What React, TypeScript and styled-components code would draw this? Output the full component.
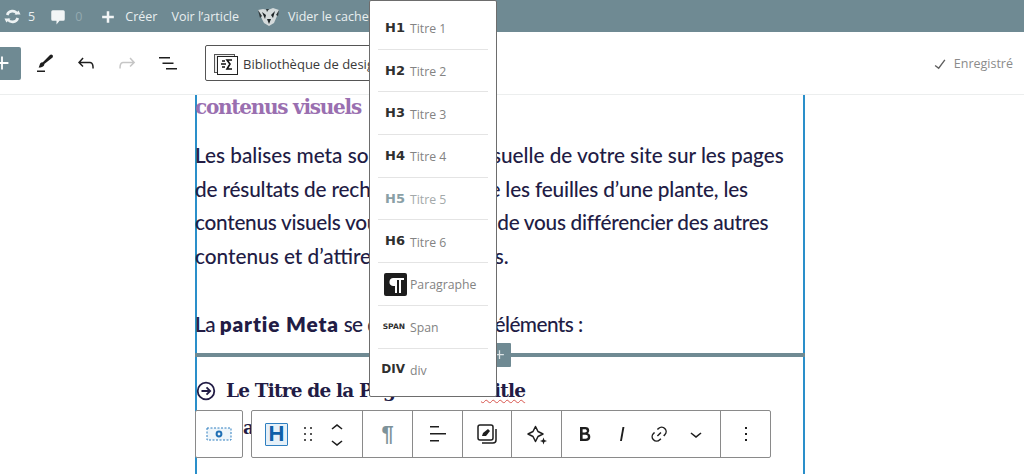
import React from 'react';
import styled, { createGlobalStyle } from 'styled-components';

// == constants ====================================================================================
const Slate = '#6f8a93';
const Ink = '#221c45';
const ToolBorder = '#8a8a8a';
const EdgeBlue = '#2a8fca';

const headings = [
  { tag: 'H1', label: 'Titre 1' },
  { tag: 'H2', label: 'Titre 2' },
  { tag: 'H3', label: 'Titre 3' },
  { tag: 'H4', label: 'Titre 4' },
  { tag: 'H5', label: 'Titre 5', faded: true },
  { tag: 'H6', label: 'Titre 6' },
];

// == styles =======================================================================================
const GlobalStyle = createGlobalStyle`
  html, body {
    margin: 0;
    padding: 0;
    background: #fff;
    overflow: hidden;
  }
`;

const Root = styled.div`
  position: relative;
  width: 1024px;
  height: 474px;
  overflow: hidden;
  font-family: "Open Sans", sans-serif;
`;

const AdminBar = styled.div`
  display: flex;
  align-items: center;
  height: 32px;
  padding: 1px 0 0 4px;
  box-sizing: border-box;
  background: ${ Slate };
  color: #e9eff0;
  font-size: 12.5px;
`;

const AdminItem = styled.div<{ gap?: number; after?: number; dim?: boolean }>`
  display: flex;
  align-items: center;
  gap: ${ ( { gap } ) => gap ?? 8 }px;
  margin-right: ${ ( { after } ) => after ?? 16 }px;
  white-space: nowrap;
  span {
    color: ${ ( { dim } ) => ( dim ? '#93a9b0' : 'inherit' ) };
  }
`;

const EditorBar = styled.div`
  display: flex;
  align-items: center;
  height: 62px;
  border-bottom: 1px solid #eceeee;
`;

const AddButton = styled.div`
  display: flex;
  align-items: center;
  justify-content: flex-end;
  width: 21px;
  height: 33px;
  margin-right: 12px;
  padding-right: 8px;
  box-sizing: border-box;
  border-radius: 0 2px 2px 0;
  background: ${ Slate };
  overflow: hidden;
  svg {
    flex-shrink: 0;
  }
`;

const BarIcon = styled.div<{ after?: number }>`
  display: flex;
  width: 24px;
  height: 24px;
  margin-right: ${ ( { after } ) => after ?? 17 }px;
`;

const LibraryButton = styled.div`
  display: flex;
  align-items: center;
  gap: 5px;
  width: 200px;
  height: 36px;
  margin-left: -1px;
  padding: 1px 0 0 8px;
  box-sizing: border-box;
  border: 1px solid #555;
  border-radius: 2px;
  font-size: 13px;
  color: #3a3a3a;
  white-space: nowrap;
`;

const SaveState = styled.div`
  display: flex;
  align-items: center;
  gap: 3px;
  margin-left: auto;
  margin-right: 11px;
  padding-top: 1px;
  font-size: 12.5px;
  color: #8b8b8b;
`;

const Content = styled.div`
  position: relative;
  width: 610px;
  height: 379px;
  margin-left: 195px;
  box-sizing: border-box;
  box-shadow: inset 2px 0 0 ${ EdgeBlue }, inset -2px 0 0 ${ EdgeBlue };
  color: ${ Ink };
`;

const SectionTitle = styled.h2`
  margin: 0;
  height: 25px;
  font-family: "DejaVu Serif", serif;
  font-size: 20px;
  line-height: 25px;
  font-weight: 700;
  letter-spacing: -1.25px;
  color: #9a6fb0;
`;

const Paragraph = styled.div<{ top: number }>`
  margin-top: ${ ( { top } ) => top }px;
  font-family: "Lato", sans-serif;
  font-size: 20.75px;
  font-weight: 500;
  line-height: 33.7px;
  white-space: nowrap;
`;

const TextLine = styled.div<{ tracking?: number }>`
  letter-spacing: ${ ( { tracking } ) => tracking ?? 0 }px;
  strong {
    font-weight: 800;
    letter-spacing: 0.9px;
  }
`;

// the part of a line that sits under the heading menu
const CoveredRun = styled.span`
  letter-spacing: 1px;
`;

const Separator = styled.div`
  position: relative;
  height: 4px;
  margin-top: 11px;
  background: ${ Slate };
`;

const InsertButton = styled.div`
  position: absolute;
  left: 292px;
  top: -10px;
  display: flex;
  align-items: center;
  justify-content: center;
  width: 24px;
  height: 24px;
  border-radius: 1px;
  background: ${ Slate };
`;

const ListHeading = styled.div`
  display: flex;
  align-items: center;
  gap: 10px;
  margin: 21px 0 0 1px;
  font-family: "DejaVu Serif", serif;
  font-size: 18.5px;
  line-height: 26px;
  font-weight: 700;
  letter-spacing: -0.8px;
  white-space: nowrap;
`;

const Squiggle = styled.span`
  text-decoration: underline wavy #d8554e 1px;
  text-underline-offset: 2px;
`;

const TrailingLine = styled.div`
  margin: 11px 0 0 48px;
  font-family: "DejaVu Serif", serif;
  font-size: 18px;
  line-height: 26px;
  font-weight: 700;
`;

const HeadingMenu = styled.div`
  position: absolute;
  left: 369px;
  top: 0;
  width: 128px;
  height: 397px;
  padding: 6px 8px 0 8px;
  box-sizing: border-box;
  background: #fff;
  border: 1px solid #6d6d6d;
  border-radius: 2px;
`;

const MenuRow = styled.div<{ last?: boolean }>`
  display: flex;
  align-items: center;
  height: 42.7px;
  padding-top: 1px;
  box-sizing: border-box;
  border-bottom: ${ ( { last } ) => ( last ? 'none' : '1px solid #e4e4e4' ) };
`;

const MenuTag = styled.div<{ size?: number; faded?: boolean }>`
  display: flex;
  justify-content: flex-end;
  width: 27px;
  margin-right: 5px;
  margin-top: -2px;
  font-family: "DejaVu Sans", sans-serif;
  font-size: ${ ( { size } ) => size ?? 13 }px;
  font-weight: 700;
  color: ${ ( { faded } ) => ( faded ? '#8aa0a6' : '#2f2f2f' ) };
  white-space: nowrap;
`;

const MenuLabel = styled.div<{ faded?: boolean }>`
  margin-top: 1px;
  font-family: "Open Sans", sans-serif;
  font-size: 12.25px;
  color: ${ ( { faded } ) => ( faded ? '#a3a9aa' : '#838383' ) };
`;

const ParagraphTile = styled.div`
  display: flex;
  align-items: center;
  justify-content: center;
  width: 23px;
  height: 23px;
  margin: 0 3px 0 6px;
  border-radius: 2px;
  background: #1d1d1d;
`;

const BlockTools = styled.div`
  position: absolute;
  left: 195px;
  top: 410px;
  display: flex;
  gap: 8px;
`;

const ToolPanel = styled.div`
  display: flex;
  height: 48px;
  box-sizing: border-box;
  background: #fff;
  border: 1px solid ${ ToolBorder };
  border-radius: 2px;
`;

const ToolGroup = styled.div<{ width: number; divider?: boolean }>`
  display: flex;
  align-items: center;
  justify-content: center;
  width: ${ ( { width } ) => width }px;
  box-sizing: border-box;
  border-right: ${ ( { divider } ) => ( divider ? `1px solid ${ ToolBorder }` : 'none' ) };
`;

const BlockGroup = styled( ToolGroup )`
  justify-content: flex-start;
  gap: 7.5px;
  padding-left: 13px;
`;

const FormatGroup = styled( ToolGroup )`
  justify-content: flex-start;
  gap: 13px;
  padding-left: 11px;
`;

const HeadingBadge = styled.div`
  display: flex;
  align-items: center;
  justify-content: center;
  width: 23px;
  height: 23px;
  box-sizing: border-box;
  border: 1.5px solid #2f7fc0;
  border-radius: 1px;
  background: #e6f0f8;
  font-family: "Liberation Sans", sans-serif;
  font-size: 22px;
  font-weight: 700;
  color: #0f5fa8;
`;

const ArrowStack = styled.div`
  display: flex;
  flex-direction: column;
  margin-left: -2px;
  svg + svg {
    margin-top: -8px;
  }
`;

const Pilcrow = styled.div`
  font-family: "Liberation Sans", sans-serif;
  font-size: 22px;
  font-weight: 700;
  color: #7d9299;
`;

// == icons ========================================================================================
function Icon( { d, size = 24, color = '#1e1e1e', rotate = 0 }: {
  d: string;
  size?: number;
  color?: string;
  rotate?: number;
} ): JSX.Element {
  return (
    <svg
      width={ size }
      height={ size }
      viewBox="0 0 24 24"
      fill={ color }
      style={ rotate ? { transform: `rotate(${ rotate }deg)` } : undefined }
    >
      <path d={ d } />
    </svg>
  );
}

function SyncIcon(): JSX.Element {
  return (
    <svg width="17" height="17" viewBox="0 0 17 17" fill="none" stroke="#edf2f3" strokeWidth="2.6">
      <path d="M3.2 7A5.5 5.5 0 0 1 13.3 6" />
      <path d="M13.8 10A5.5 5.5 0 0 1 3.7 11" />
      <path d="M10.5 6.6H16.5L14.6 2.6Z" fill="#edf2f3" stroke="none" />
      <path d="M6.5 10.4H0.5L2.4 14.4Z" fill="#edf2f3" stroke="none" />
    </svg>
  );
}

function CacheLogo(): JSX.Element {
  return (
    <svg width="23" height="20" viewBox="0 0 23 20">
      <path d="M1 3l5 -1 5 1 5 -2 6 2 -2 6 -3 7 -5 3 -5 -3 -3 -6z" fill="#d4dadb" />
      <path d="M5 5l4 3 -1 4zM18 4l-4 4 2 3zM10 12h4l-2 5z" fill="#1c2326" />
      <path d="M1 3l4 6 -2 2zM22 3l-3 5 2 1zM9 2l1 3 2-3z" fill="#2e373a" />
    </svg>
  );
}

function LibraryIcon(): JSX.Element {
  return (
    <svg width="24" height="24" viewBox="0 0 24 24" fill="none">
      <rect x="0.5" y="2.5" width="20" height="18" stroke="#555" fill="#eee" />
      <rect x="3.5" y="4.5" width="20" height="18" stroke="#222" fill="#fff" />
      <path d="M18 8h-5l3 4-3 5h5M12 12H7M11 9H8M11 15H8" stroke="#111" strokeWidth="1.6" />
    </svg>
  );
}

function ParagraphGlyph(): JSX.Element {
  return (
    <svg width="19" height="19" viewBox="0 0 19 19">
      <path d="M8 3H18V5H15V18H13V5H11V18H9V11H7A4 4 0 0 1 8 3Z" fill="#fff" />
    </svg>
  );
}

function CirclePointer(): JSX.Element {
  return (
    <svg width="20" height="20" viewBox="0 0 20 20" fill="none" stroke={ Ink } strokeWidth="1.8">
      <circle cx="10" cy="10" r="8.3" />
      <path d="M5.5 10H14M10.5 6.3L14.2 10L10.5 13.7" />
    </svg>
  );
}

function BlockTypeIcon(): JSX.Element {
  return (
    <svg width="26" height="14" viewBox="0 0 26 14" fill="none">
      <rect x="1" y="1" width="24" height="12" stroke="#2f7fc0" strokeDasharray="2 1.5" fill="#eef5fa" />
      <circle cx="13" cy="7" r="2.4" stroke="#1f6fb5" strokeWidth="2" />
    </svg>
  );
}

function StylesIcon(): JSX.Element {
  return (
    <svg width="24" height="24" viewBox="0 0 24 24" fill="none" stroke="#1e1e1e" strokeWidth="1.5">
      <rect x="3" y="3" width="15" height="15" rx="2" />
      <path d="M21 7v11a3 3 0 0 1-3 3H7" />
      <path d="M7 14l1-3 5-4 2 2-4 5z" fill="#1e1e1e" stroke="none" />
    </svg>
  );
}

function SparkleIcon(): JSX.Element {
  return (
    <svg width="24" height="24" viewBox="0 0 24 24" fill="none" stroke="#1e1e1e" strokeWidth="1.5">
      <path d="M10.5 4.5L13 9.5L18 12L13 14.5L10.5 19.5L8 14.5L3 12L8 9.5Z" strokeLinejoin="round" />
      <path d="M18.5 15.5L19.4 18.1L22 19L19.4 19.9L18.5 22.5L17.6 19.9L15 19L17.6 18.1Z" fill="#1e1e1e" stroke="none" />
    </svg>
  );
}

const paths = {
  plus: 'M10.5 5h3v5.5H19v3h-5.5V19h-3v-5.5H5v-3h5.5z',
  thinPlus: 'M11 5h2v6h6v2h-6v6h-2v-6H5v-2h6z',
  pen: 'M4 21h8v-1.6H4V21zM19.4 4c-.7-.7-1.7-.7-2.4 0l-7.4 7.4c-.4-.1-.7 0-1.1.1-.5.2-1.4.7-1.8 2.2-.3 1-.6 1.8-.7 2.1l-.3 1 1-.2c.1 0 1.3-.4 2.3-.7 1.5-.4 2-1.4 2.2-1.9.1-.4.2-.7.1-1.1L19.6 6.4c.5-.7.5-1.7-.2-2.4z',
  undo: 'M18.3 11.7c-.6-.6-1.4-.9-2.3-.9H6.7l2.9-3.3-1.1-1-4.5 5L8.5 16l1-1-2.7-2.7H16c.5 0 .9.2 1.3.5 1 1 1 3.4 1 4.5v.3h1.5v-.2c0-1.5 0-4.3-1.5-5.7z',
  redo: 'M15.6 6.5l-1.1 1 2.9 3.3H8c-.9 0-1.7.3-2.3.9-1.4 1.5-1.4 4.2-1.4 5.6v.2h1.5v-.3c0-1.1 0-3.5 1-4.5.3-.3.7-.5 1.3-.5h9.2L14.5 15l1.1 1.1 4.6-4.6-4.6-5z',
  list: 'M3 6h11v1.5H3V6Zm3.5 5.5h11V13h-11v-1.5ZM21 17H10v1.5h11V17Z',
  check: 'M16.7 7.1l-6.3 8.5-3.3-2.5-.9 1.2 4.5 3.4L17.9 7.9z',
  comment: 'M5 3h14a2 2 0 0 1 2 2v10a2 2 0 0 1-2 2h-5l-4 5v-5H5a2 2 0 0 1-2-2V5a2 2 0 0 1 2-2z',
  drag: 'M8 7h2V5H8v2zm0 6h2v-2H8v2zm0 6h2v-2H8v2zm6-14v2h2V5h-2zm0 8h2v-2h-2v2zm0 6h2v-2h-2v2z',
  up: 'M6.5 14.4L12 10l5.5 4.4-.9 1.2L12 12l-4.5 3.6z',
  down: 'M17.5 11.6L12 16l-5.5-4.4.9-1.2L12 14l4.5-3.6 1 1.2z',
  align: 'M13 5.5H4V4h9v1.5Zm7 7H4V11h16v1.5Zm-7 7H4V18h9v1.5Z',
  bold: 'M14.7 11.3c1-.6 1.5-1.6 1.5-3 0-2.3-1.3-3.4-4-3.4H7v14h5.8c1.4 0 2.5-.3 3.3-1 .8-.7 1.2-1.7 1.2-2.9.1-1.9-.8-3.1-2.6-3.7zm-5.1-4h2.3c.6 0 1.1.1 1.4.4.3.3.5.7.5 1.2s-.2 1-.5 1.2c-.3.3-.8.4-1.4.4H9.6V7.3zm4.6 9c-.4.3-1 .4-1.7.4H9.6v-3.9h2.9c.7 0 1.3.2 1.7.5.4.3.6.8.6 1.5s-.2 1.2-.6 1.5z',
  italic: 'M12.5 5L10 19h1.9l2.5-14z',
  link: 'M10 17.389H8.444A5.194 5.194 0 1 1 8.444 7H10v1.5H8.444a3.694 3.694 0 0 0 0 7.389H10v1.5ZM14 7h1.556a5.194 5.194 0 0 1 0 10.39H14v-1.5h1.556a3.694 3.694 0 0 0 0-7.39H14V7Zm-4.5 6h5v-1.5h-5V13Z',
  more: 'M13 19h-2v-2h2v2zm0-6h-2v-2h2v2zm0-6h-2V5h2v2z',
};

// == components ===================================================================================
export default function App(): JSX.Element {
  return (
    <Root>
      <GlobalStyle />

      <AdminBar>
        <AdminItem after={ 14 } gap={ 7 }>
          <SyncIcon />
          <span>5</span>
        </AdminItem>
        <AdminItem after={ 16 } dim>
          <Icon d={ paths.comment } size={ 18 } color="#f2f5f6" />
          <span>0</span>
        </AdminItem>
        <AdminItem after={ 14 } gap={ 7 }>
          <Icon d={ paths.plus } size={ 20 } color="#f2f5f6" />
          <span>Créer</span>
        </AdminItem>
        <AdminItem after={ 18 }>Voir l’article</AdminItem>
        <AdminItem>
          <CacheLogo />
          <span>Vider le cache</span>
        </AdminItem>
      </AdminBar>

      <EditorBar>
        <AddButton>
          <Icon d={ paths.thinPlus } size={ 22 } color="#fff" />
        </AddButton>
        <BarIcon><Icon d={ paths.pen } /></BarIcon>
        <BarIcon><Icon d={ paths.undo } /></BarIcon>
        <BarIcon><Icon d={ paths.redo } color="#c6c6c6" /></BarIcon>
        <BarIcon after={ 26 }><Icon d={ paths.list } /></BarIcon>
        <LibraryButton>
          <LibraryIcon />
          Bibliothèque de design
        </LibraryButton>
        <SaveState>
          <Icon d={ paths.check } size={ 22 } color="#5f5f5f" />
          Enregistré
        </SaveState>
      </EditorBar>

      <Content>
        <SectionTitle>contenus visuels</SectionTitle>
        <Paragraph top={ 19 }>
          <TextLine>Les balises meta sont la vitrine visuelle de votre site sur les pages</TextLine>
          <TextLine tracking={ -0.16 }>de résultats de recherche. Comme les feuilles d’une plante, les</TextLine>
          <TextLine tracking={ -0.27 }>contenus visuels vous permettent de vous différencier des autres</TextLine>
          <TextLine>contenus et d’attire<CoveredRun>r les visiteur</CoveredRun>s.</TextLine>
        </Paragraph>
        <Paragraph top={ 34 }>
          <TextLine tracking={ -0.55 }>La <strong>partie Meta</strong> se divise en deux éléments :</TextLine>
        </Paragraph>
        <Separator>
          <InsertButton>
            <Icon d={ paths.thinPlus } size={ 15 } color="#dfe6e8" />
          </InsertButton>
        </Separator>
        <ListHeading>
          <CirclePointer />
          <span>Le Titre de la Page – Meta <Squiggle>Title</Squiggle></span>
        </ListHeading>
        <TrailingLine>a</TrailingLine>
      </Content>

      <HeadingMenu>
        { headings.map( ( { tag, label, faded } ) => (
          <MenuRow key={ tag }>
            <MenuTag faded={ faded }>{ tag }</MenuTag>
            <MenuLabel faded={ faded }>{ label }</MenuLabel>
          </MenuRow>
        ) ) }
        <MenuRow>
          <ParagraphTile><ParagraphGlyph /></ParagraphTile>
          <MenuLabel>Paragraphe</MenuLabel>
        </MenuRow>
        <MenuRow>
          <MenuTag size={ 7.5 }>SPAN</MenuTag>
          <MenuLabel>Span</MenuLabel>
        </MenuRow>
        <MenuRow last>
          <MenuTag size={ 12 }>DIV</MenuTag>
          <MenuLabel>div</MenuLabel>
        </MenuRow>
      </HeadingMenu>

      <BlockTools>
        <ToolPanel>
          <ToolGroup width={ 46 }><BlockTypeIcon /></ToolGroup>
        </ToolPanel>
        <ToolPanel>
          <BlockGroup width={ 111 } divider>
            <HeadingBadge>H</HeadingBadge>
            <Icon d={ paths.drag } color="#555" />
            <ArrowStack>
              <Icon d={ paths.up } />
              <Icon d={ paths.down } />
            </ArrowStack>
          </BlockGroup>
          <ToolGroup width={ 50 } divider><Pilcrow>¶</Pilcrow></ToolGroup>
          <ToolGroup width={ 50 } divider><Icon d={ paths.align } /></ToolGroup>
          <ToolGroup width={ 49 } divider><StylesIcon /></ToolGroup>
          <ToolGroup width={ 50 } divider><SparkleIcon /></ToolGroup>
          <FormatGroup width={ 159 } divider>
            <Icon d={ paths.bold } />
            <Icon d={ paths.italic } />
            <Icon d={ paths.link } rotate={ -45 } />
            <Icon d={ paths.down } />
          </FormatGroup>
          <ToolGroup width={ 49 }><Icon d={ paths.more } /></ToolGroup>
        </ToolPanel>
      </BlockTools>
    </Root>
  );
}
